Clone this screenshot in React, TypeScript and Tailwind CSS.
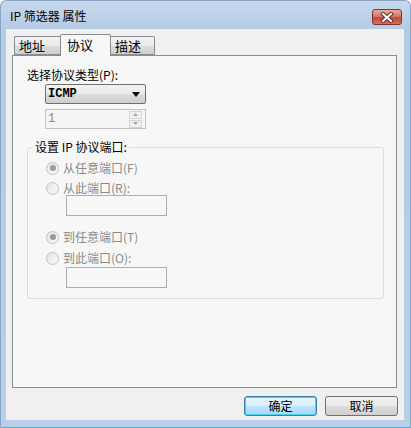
import React from "react";

const cjk = { fontFamily: "'Noto Sans CJK SC', 'Noto Sans', sans-serif" };

function Radio({ checked, label, top }: { checked?: boolean; label: string; top: number }) {
  return (
    <div className="flex items-center h-[14px]" style={{ marginTop: top }}>
      <div className="w-[13px] h-[13px] rounded-full border border-[#c2c2c2] bg-gradient-to-br from-[#e6e6e6] to-[#f8f8f8] flex items-center justify-center">
        {checked && <div className="w-[6px] h-[6px] rounded-full bg-[#9a9a9a]" />}
      </div>
      <span className="ml-[4px] text-[12px] leading-none text-[#8a8a8a]">{label}</span>
    </div>
  );
}

function Button({ label, primary }: { label: string; primary?: boolean }) {
  return (
    <div
      className={
        "w-[73px] h-[20px] rounded-[3px] border flex items-center justify-center text-[12px] text-black " +
        (primary
          ? "border-[#3c7fb1] shadow-[inset_0_0_0_1px_#48d0f5] bg-[linear-gradient(#eaf6fd_0%,#d9f0fc_50%,#bee6fd_51%,#a7d9f5_100%)]"
          : "border-[#707070] bg-[linear-gradient(#f2f2f2_0%,#ebebeb_50%,#dddddd_51%,#cfcfcf_100%)]")
      }
    >
      {label}
    </div>
  );
}

export default function App() {
  return (
    <div className="w-[411px] h-[428px] overflow-hidden bg-white" style={cjk}>
      <div className="w-[411px] h-[428px] rounded-t-[6px] bg-[linear-gradient(#c6d8ec_0px,#b4cbe4_30px,#b7cfe8_100%)] border border-[#8ba5c4] border-b-0 flex flex-col">
        {/* title bar */}
        <div className="h-[28px] flex items-center pl-[9px] pr-[8px]">
          <span className="text-[12px] text-black mt-[2px]">IP 筛选器 属性</span>
          <div className="ml-auto mt-[4px] w-[30px] h-[16px] rounded-[3px] border border-[#84332b] bg-[linear-gradient(#e9a99c_0%,#d7786a_45%,#c24a36_55%,#d0725e_100%)] flex items-center justify-center">
            <svg width="14" height="11" viewBox="0 0 14 11">
              <path d="M3 2 L11 9 M11 2 L3 9" stroke="#5b2520" strokeWidth="4" strokeLinecap="square" />
              <path d="M3 2 L11 9 M11 2 L3 9" stroke="#ffffff" strokeWidth="2.2" strokeLinecap="square" />
            </svg>
          </div>
        </div>

        {/* client area */}
        <div className="ml-[5px] mr-[6px] h-[391px] bg-[#f0f0f0] relative">
          {/* tabs */}
          <div className="flex items-end h-[27px] pl-[8px] relative z-10">
            <div className="w-[46px] h-[19px] mb-[1px] border border-[#898c95] border-r-0 rounded-tl-[2px] bg-[linear-gradient(#f2f2f2_0%,#ebebeb_50%,#dddddd_51%,#cfcfcf_100%)] text-[13px] leading-[18px] pl-[4px] text-black">
              地址
            </div>
            <div className="w-[51px] h-[22px] border border-[#898c95] border-b-0 rounded-t-[2px] bg-[#f7f7f7] text-[13px] leading-[20px] pl-[6px] text-black">
              协议
            </div>
            <div className="w-[44px] h-[19px] mb-[1px] border border-[#898c95] border-l-0 rounded-tr-[2px] bg-[linear-gradient(#f2f2f2_0%,#ebebeb_50%,#dddddd_51%,#cfcfcf_100%)] text-[13px] leading-[18px] pl-[4px] text-black">
              描述
            </div>
          </div>

          {/* tab panel */}
          <div className="ml-[6px] -mt-[1px] w-[385px] h-[333px] border border-[#898c95] bg-[#f7f7f7] pl-[14px] pt-[11px]">
            <div className="text-[12px] leading-[16px] text-black">选择协议类型(P):</div>
            <div className="ml-[18px] mt-[1px] w-[101px] h-[20px] rounded-[2px] border border-[#707070] bg-[linear-gradient(#f2f2f2_0%,#ebebeb_50%,#dddddd_51%,#cfcfcf_100%)] flex items-center pl-[2px] pr-[5px]">
              <span className="text-[12px] font-bold text-black" style={{ fontFamily: "'Liberation Mono', monospace" }}>
                ICMP
              </span>
              <svg className="ml-auto" width="8" height="5" viewBox="0 0 8 5">
                <path d="M0 0 H8 L4 5 Z" fill="#000" />
              </svg>
            </div>
            <div className="ml-[18px] mt-[5px] w-[101px] h-[20px] border border-[#c3c3c3] bg-[#f4f4f4] flex items-center pl-[2px] pr-[3px]">
              <span className="text-[12px] text-[#8a8a8a]" style={{ fontFamily: "'Liberation Mono', monospace" }}>
                1
              </span>
              <div className="ml-auto flex flex-col gap-[1px]">
                <div className="w-[13px] h-[8px] border border-[#d5d5d5] bg-[#efefef] flex items-center justify-center">
                  <svg width="5" height="3" viewBox="0 0 5 3">
                    <path d="M0 3 H5 L2.5 0 Z" fill="#a8a8a8" />
                  </svg>
                </div>
                <div className="w-[13px] h-[8px] border border-[#d5d5d5] bg-[#efefef] flex items-center justify-center">
                  <svg width="5" height="3" viewBox="0 0 5 3">
                    <path d="M0 0 H5 L2.5 3 Z" fill="#a8a8a8" />
                  </svg>
                </div>
              </div>
            </div>

            {/* group box */}
            <div className="mt-[10px] w-[357px] h-[160px] relative">
              <div className="absolute left-0 right-0 top-[8px] bottom-0 border border-[#d5dfe5] rounded-[3px]" />
              <div className="absolute left-[6px] top-0 px-[2px] bg-[#f7f7f7] text-[12px] leading-[16px] text-black">
                设置 IP 协议端口:
              </div>
              <div className="relative pt-[22px] pl-[19px] flex flex-col">
                <Radio checked label="从任意端口(F)" top={0} />
                <Radio label="从此端口(R):" top={6} />
                <div className="ml-[20px] mt-0 w-[101px] h-[21px] border border-[#abadb3] bg-[#f7f7f7]" />
                <Radio checked label="到任意端口(T)" top={14} />
                <Radio label="到此端口(O):" top={7} />
                <div className="ml-[20px] mt-[2px] w-[101px] h-[21px] border border-[#abadb3] bg-[#f7f7f7]" />
              </div>
            </div>
          </div>

          {/* buttons */}
          <div className="flex justify-end gap-[8px] pr-[6px] mt-[8px]">
            <Button label="确定" primary />
            <Button label="取消" />
          </div>
        </div>
        <div className="flex-1" />
        <div className="h-[1px] bg-[#3bb6dc]" />
      </div>
    </div>
  );
}
